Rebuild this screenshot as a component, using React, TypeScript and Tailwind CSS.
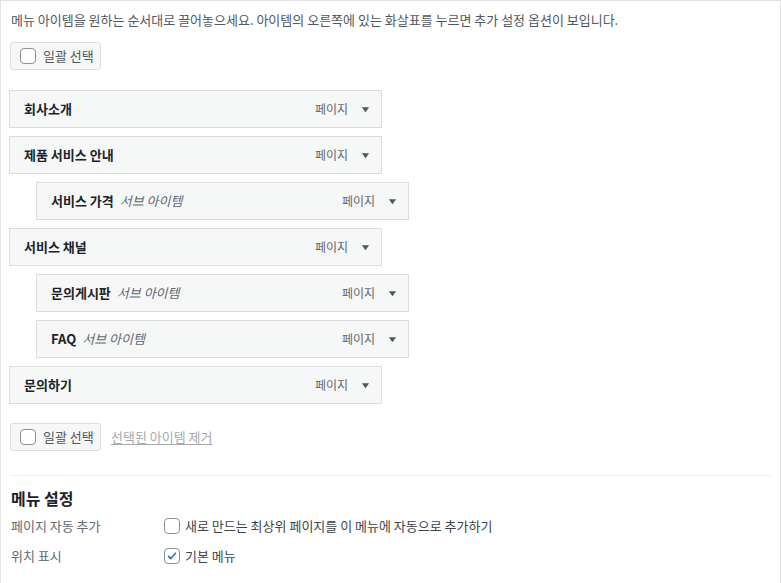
import React from 'react'

const font = { fontFamily: '"Noto Sans CJK KR", "Noto Sans", sans-serif' }

type Item = { title: string; sub?: boolean }

const items: Item[] = [
  { title: '회사소개' },
  { title: '제품 서비스 안내' },
  { title: '서비스 가격', sub: true },
  { title: '서비스 채널' },
  { title: '문의게시판', sub: true },
  { title: 'FAQ', sub: true },
  { title: '문의하기' },
]

function Box({ checked }: { checked?: boolean }) {
  return (
    <span className="w-4 h-4 rounded-[4px] border border-[#8c8f94] bg-white flex items-center justify-center shrink-0">
      {checked && (
        <svg viewBox="0 0 20 20" className="w-[18px] h-[18px]">
          <path d="M5 10.5l3.2 3.2L15 6" fill="none" stroke="#2271b1" strokeWidth={2.2} strokeLinecap="round" strokeLinejoin="round" />
        </svg>
      )}
    </span>
  )
}

function SelectAll() {
  return (
    <div className="h-[28px] w-[91px] pl-[9px] flex items-center gap-[7px] whitespace-nowrap border border-[#dcdcde] rounded-[3px] bg-[#f6f7f7] text-[13px] text-[#50575e]">
      <Box />
      <span>일괄 선택</span>
    </div>
  )
}

function MenuItem({ item }: { item: Item }) {
  return (
    <div className={`h-[38px] w-[373px] flex items-center border border-[#dcdcde] bg-[#f6f7f7] pl-[14px] pr-[11px] ${item.sub ? 'ml-[27px]' : ''}`}>
      <span className="font-semibold text-[13px] text-[#1d2327]">{item.title}</span>
      {item.sub && <span className="ml-[6px] italic text-[13px] text-[#646970]">서브 아이템</span>}
      <span className="ml-auto text-[12px] text-[#646970]">페이지</span>
      <svg viewBox="0 0 10 10" className="w-[9px] h-[9px] ml-[13px]">
        <path d="M1 2.5h8L5 8z" fill="#50575e" />
      </svg>
    </div>
  )
}

export default function App() {
  return (
    <div className="w-[781px] min-h-[600px] bg-white border-t border-l border-r border-[#e2e2e4] pl-[8px] pt-[9px]" style={font}>
      <p className="text-[13px] leading-[20px] text-[#50575e] pl-[2px]">
        메뉴 아이템을 원하는 순서대로 끌어놓으세요. 아이템의 오른쪽에 있는 화살표를 누르면 추가 설정 옵션이 보입니다.
      </p>

      <div className="mt-[12px] pl-px">
        <SelectAll />
      </div>

      <div className="mt-[20px] flex flex-col gap-[8px]">
        {items.map((item, i) => (
          <MenuItem key={i} item={item} />
        ))}
      </div>

      <div className="mt-[19px] pl-px flex items-center gap-[10px]">
        <SelectAll />
        <span className="text-[13px] text-[#a7aaad] underline underline-offset-2">선택된 아이템 제거</span>
      </div>

      <div className="mt-[24px] ml-px mr-[9px] border-t border-[#f0f0f1]" />

      <h3 className="mt-[10px] pl-[2px] text-[16px] leading-[24px] font-semibold text-[#1d2327]">메뉴 설정</h3>

      <div className="mt-[6px] flex flex-col gap-[10px] text-[13px] pl-[2px]">
        <div className="flex items-center h-[20px]">
          <span className="w-[153px] text-[#646970]">페이지 자동 추가</span>
          <Box />
          <span className="ml-[5px] text-[#3c434a]">새로 만드는 최상위 페이지를 이 메뉴에 자동으로 추가하기</span>
        </div>
        <div className="flex items-center h-[20px]">
          <span className="w-[153px] text-[#646970]">위치 표시</span>
          <Box checked />
          <span className="ml-[5px] text-[#3c434a]">기본 메뉴</span>
        </div>
      </div>
    </div>
  )
}
